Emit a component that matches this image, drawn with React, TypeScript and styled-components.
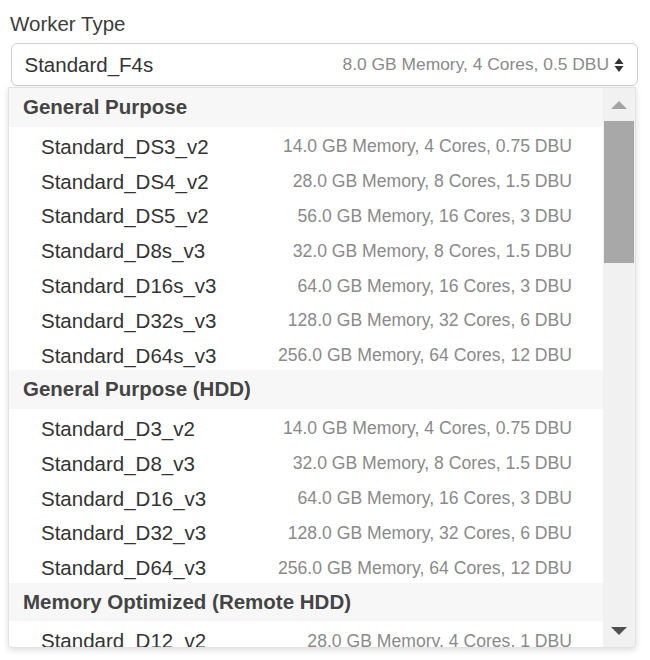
import React from "react";
import styled, { createGlobalStyle } from "styled-components";

const GlobalStyle = createGlobalStyle`
  html, body {
    margin: 0;
    padding: 0;
    background: #ffffff;
  }
  body {
    font-family: "Liberation Sans", Arial, Helvetica, sans-serif;
    color: #333;
  }
`;

const Page = styled.div`
  width: 650px;
  height: 660px;
  box-sizing: border-box;
  padding: 12px 12px 0 8px;
  overflow: hidden;
`;

const Label = styled.div`
  font-size: 20.5px;
  line-height: 24px;
  color: #3d3d3d;
  padding-left: 2px;
  margin-bottom: 7px;
`;

const SelectBox = styled.div`
  margin-left: 2.5px;
  height: 43px;
  box-sizing: border-box;
  border: 1px solid #cfcfcf;
  border-radius: 6px;
  display: flex;
  align-items: center;
  padding: 0 13px 0 13px;
  background: #fff;
`;

const SelectValue = styled.span`
  font-size: 20.5px;
  color: #333;
  flex: 1;
`;

const SelectMeta = styled.span`
  font-size: 17.4px;
  color: #8a8a8a;
`;

const Caret = styled.svg`
  margin-left: 5px;
  flex: none;
`;

const Dropdown = styled.div`
  margin-top: 1px;
  margin-right: 2px;
  height: 561px;
  box-sizing: border-box;
  border: 1px solid #e3e3e3;
  border-radius: 0 0 4px 4px;
  box-shadow: 0 2px 6px rgba(0, 0, 0, 0.14);
  display: flex;
  overflow: hidden;
  background: #fff;
`;

const List = styled.div`
  flex: 1;
  overflow: hidden;
`;

const GroupHeader = styled.div`
  height: 38.5px;
  line-height: 37px;
  background: #f7f7f7;
  padding-left: 14px;
  font-size: 20.5px;
  font-weight: bold;
  color: #444;
`;

const Option = styled.div`
  height: 34.8px;
  box-sizing: border-box;
  display: flex;
  align-items: center;
  padding: 6px 31px 0 32px;
`;

const OptionName = styled.span`
  flex: 1;
  font-size: 20.5px;
  color: #333;
  white-space: nowrap;
`;

const OptionMeta = styled.span`
  font-size: 17.6px;
  color: #8a8a8a;
  white-space: nowrap;
`;

const Scrollbar = styled.div`
  width: 32px;
  background: #f1f1f1;
  display: flex;
  flex-direction: column;
`;

const ScrollButton = styled.div`
  height: 33px;
  display: flex;
  align-items: center;
  justify-content: center;
  flex: none;
`;

const Thumb = styled.div`
  height: 142px;
  margin: 0 1px;
  background: #a8a8a8;
  flex: none;
`;

const Spacer = styled.div`
  flex: 1;
`;

type Item = [string, string];
type Group = { title: string; items: Item[] };

const groups: Group[] = [
  {
    title: "General Purpose",
    items: [
      ["Standard_DS3_v2", "14.0 GB Memory, 4 Cores, 0.75 DBU"],
      ["Standard_DS4_v2", "28.0 GB Memory, 8 Cores, 1.5 DBU"],
      ["Standard_DS5_v2", "56.0 GB Memory, 16 Cores, 3 DBU"],
      ["Standard_D8s_v3", "32.0 GB Memory, 8 Cores, 1.5 DBU"],
      ["Standard_D16s_v3", "64.0 GB Memory, 16 Cores, 3 DBU"],
      ["Standard_D32s_v3", "128.0 GB Memory, 32 Cores, 6 DBU"],
      ["Standard_D64s_v3", "256.0 GB Memory, 64 Cores, 12 DBU"],
    ],
  },
  {
    title: "General Purpose (HDD)",
    items: [
      ["Standard_D3_v2", "14.0 GB Memory, 4 Cores, 0.75 DBU"],
      ["Standard_D8_v3", "32.0 GB Memory, 8 Cores, 1.5 DBU"],
      ["Standard_D16_v3", "64.0 GB Memory, 16 Cores, 3 DBU"],
      ["Standard_D32_v3", "128.0 GB Memory, 32 Cores, 6 DBU"],
      ["Standard_D64_v3", "256.0 GB Memory, 64 Cores, 12 DBU"],
    ],
  },
  {
    title: "Memory Optimized (Remote HDD)",
    items: [["Standard_D12_v2", "28.0 GB Memory, 4 Cores, 1 DBU"]],
  },
];

export default function App() {
  return (
    <Page>
      <GlobalStyle />
      <Label>Worker Type</Label>
      <SelectBox>
        <SelectValue>Standard_F4s</SelectValue>
        <SelectMeta>8.0 GB Memory, 4 Cores, 0.5 DBU</SelectMeta>
        <Caret width="10" height="18" viewBox="0 0 10 18">
          <path d="M5 2 L9.5 8 L0.5 8 Z" fill="#333" />
          <path d="M0.5 10 L9.5 10 L5 16 Z" fill="#333" />
        </Caret>
      </SelectBox>
      <Dropdown>
        <List>
          {groups.map((g) => (
            <React.Fragment key={g.title}>
              <GroupHeader>{g.title}</GroupHeader>
              {g.items.map(([name, meta]) => (
                <Option key={name}>
                  <OptionName>{name}</OptionName>
                  <OptionMeta>{meta}</OptionMeta>
                </Option>
              ))}
            </React.Fragment>
          ))}
        </List>
        <Scrollbar>
          <ScrollButton>
            <svg width="16" height="8" viewBox="0 0 16 8">
              <path d="M8 0 L16 8 L0 8 Z" fill="#a3a3a3" />
            </svg>
          </ScrollButton>
          <Thumb />
          <Spacer />
          <ScrollButton>
            <svg width="16" height="8" viewBox="0 0 16 8">
              <path d="M0 0 L16 0 L8 8 Z" fill="#505050" />
            </svg>
          </ScrollButton>
        </Scrollbar>
      </Dropdown>
    </Page>
  );
}
